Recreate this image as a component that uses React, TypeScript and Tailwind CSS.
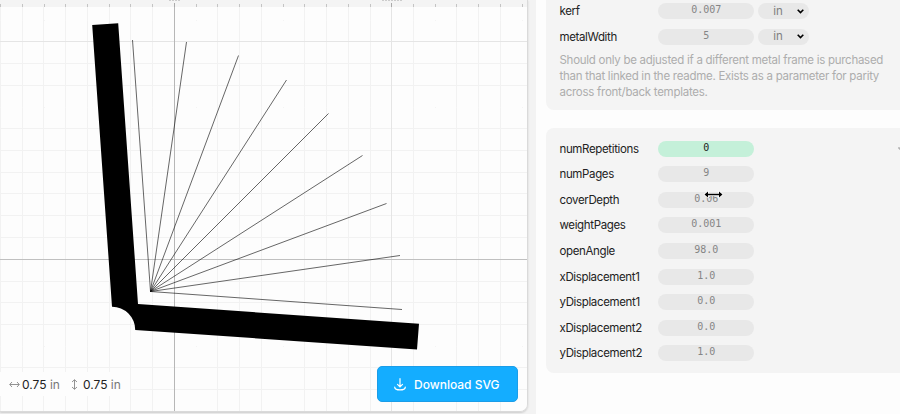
import React from "react";

const V = [0, 22, 43, 65, 87, 109, 130, 152, 217, 239, 261, 304, 326, 348, 370, 413, 456, 478, 500];
const H = [63, 85, 128, 150, 172, 193, 215, 237, 281, 302, 324, 367, 389];
const TICKS = [0, 22, 44, 65, 87, 109, 130, 152, 196, 217, 239, 261, 283, 304, 326, 348, 370, 413, 435, 456, 478, 500, 522];
const RAYS = [
  [132.5, 40], [186.5, 42], [238.5, 55.5], [286.5, 80], [328.5, 113.5],
  [362.5, 155.5], [386.5, 203.5], [400, 255.5], [402, 309.5],
];

function Drawing() {
  return (
    <svg className="block h-[411px] w-[528px]" viewBox="0 0 528 411">
      <rect width="528" height="411" fill="#fdfdfd" />
      {V.map((x) => <rect key={x} x={x} y="7" width="1" height="404" fill="#f2f2f2" />)}
      {H.map((y) => <rect key={y} x="0" y={y} width="528" height="1" fill="#f2f2f2" />)}
      {[20, 107, 346].map((y) => TICKS.map((x) => <rect key={`${x}-${y}`} x={x} y={y} width="1" height="1" fill="#f4f4f4" />))}
      <rect y="41" width="528" height="1" fill="#e5e5e5" />
      <rect x="391" y="3" width="1" height="408" fill="#e5e5e5" />
      <rect y="259" width="528" height="1" fill="#c0c0c0" />
      <rect x="174" y="3" width="1" height="408" fill="#b7b7b7" />
      <rect width="528" height="7" fill="#f4f4f4" />
      {TICKS.map((x) => <rect key={x} x={x} y="4" width="1" height="3" fill="#c4c4c4" />)}
      <rect x="174" y="3" width="1" height="4" fill="#aaaaaa" />
      <rect x="391" y="3" width="1" height="4" fill="#aaaaaa" />
      <path d="M169 .5h12M382 .5h20" stroke="#cccccc" strokeDasharray="2 1" />
      <path d="M92.2 25 118.2 23.2 138 304 419 323.8 417 349.5 135.2 330A23 23 0 0 0 112 306.8Z" fill="#000" />
      {RAYS.map(([x, y]) => <path key={x} d={`M150.5 291.5 ${x} ${y}`} stroke="#000" strokeWidth=".6" />)}
    </svg>
  );
}

function Arrow({ vertical = false }: { vertical?: boolean }) {
  return (
    <svg className={vertical ? "ml-[9px] mr-[3px] h-[11px] w-[11px] rotate-90" : "mr-[2px] h-[11px] w-[11px]"} viewBox="0 0 11 11" fill="none" stroke="#777" strokeWidth=".8">
      <path d="M1 5.5h9M3 3 .7 5.5 3 8M8 3l2.3 2.5L8 8" />
    </svg>
  );
}

function Unit() {
  return (
    <div className="ml-[4px] flex h-4 w-[51px] items-center rounded-full bg-[#e8e8e8] pl-[15px] text-[11.5px] tracking-[-0.1px] text-[#808080]">
      in
      <svg className="ml-[14px] h-[5px] w-[7px]" viewBox="0 0 7 5" fill="none" stroke="#000" strokeWidth="1.6"><path d="m.7.8 2.8 2.8L6.3.8" /></svg>
    </div>
  );
}

function Row({ name, value, unit = false, active = false }: { name: string; value: string; unit?: boolean; active?: boolean }) {
  return (
    <div className="flex h-[25.55px] items-center">
      <span className="w-[98.8px] text-[11.5px] leading-4 tracking-[-0.36px] text-[#222]">{name}</span>
      <div className={active
        ? "flex h-4 w-24 justify-center rounded-full bg-[#c4f0d9] font-['DejaVu_Sans_Mono',monospace] text-[10px] leading-[14px] text-[#222]"
        : "flex h-4 w-24 justify-center rounded-full bg-[#e8e8e8] font-['DejaVu_Sans_Mono',monospace] text-[10px] leading-[14px] text-[#858585]"}>
        {value}
      </div>
      {unit && <Unit />}
    </div>
  );
}

export default function App() {
  return (
    <main className="flex h-[414px] w-[900px] overflow-hidden bg-[#fdfdfd] font-['Inter',sans-serif]">
      <section className="relative h-[414px] w-[536px] shrink-0 bg-[#f3f3f3]">
        <div className="h-[412px] w-[528px] overflow-hidden rounded-br-lg border-b border-r border-[#dadada] shadow-[0_1px_2px_#ccc]">
          <Drawing />
        </div>
        <div className="absolute left-0 top-[372px] flex h-6 w-[130px] items-center bg-[#fdfdfd] pl-[9px] pt-px text-[12px] text-[#222]">
          <Arrow /><span>0.75 <span className="text-[#777]">in</span></span>
          <Arrow vertical /><span>0.75 <span className="text-[#777]">in</span></span>
        </div>
        <button className="absolute left-[377px] top-[366px] flex h-9 w-[141px] items-center whitespace-nowrap rounded-[5px] border border-[#1b9de8] bg-[#14adff] pl-4 pt-px text-[12px] font-medium text-white">
          <svg className="mr-2 h-[13px] w-3" viewBox="0 0 12 13" fill="none" stroke="#fff" strokeWidth="1.2" strokeLinecap="round"><path d="M6 .7v8M3.5 6.3 6 8.8l2.500-2.500M.7 9.1c.2 3.7 10.4 3.7 10.6 0" /></svg>
          Download SVG
        </button>
      </section>
      <section className="relative ml-[10px] w-[354px]">
        <div className="h-[110px] overflow-hidden rounded-bl-lg bg-[#f4f4f4] pl-[13.5px]">
          <div className="-mt-[1.5px]">
            <Row name="kerf" value="0.007" unit />
            <Row name="metalWdith" value="5" unit />
          </div>
          <p className="mt-[2.5px] whitespace-nowrap text-[11.5px] leading-4 tracking-[-0.27px] text-[#adadad]">
            Should only be adjusted if a different metal frame is purchased<br />
            than that linked in the readme. Exists as a parameter for parity<br />
            across front/back templates.
          </p>
        </div>
        <div className="mt-[18px] h-[245px] rounded-l-lg bg-[#f4f4f4] pl-[13.5px] pt-[8px]">
          <Row name="numRepetitions" value="0" active />
          <Row name="numPages" value="9" />
          <Row name="coverDepth" value="0.06" />
          <Row name="weightPages" value="0.001" />
          <Row name="openAngle" value="98.0" />
          <Row name="xDisplacement1" value="1.0" />
          <Row name="yDisplacement1" value="0.0" />
          <Row name="xDisplacement2" value="0.0" />
          <Row name="yDisplacement2" value="1.0" />
        </div>
        <svg className="absolute left-[157px] top-[189px] h-[11px] w-[21px]" viewBox="0 0 21 11"><path d="M1.500 5.500 5 2.500v2.300h11V2.500l3.500 3-3.500 3V6.200H5v2.300Z" fill="#000" stroke="#fff" strokeWidth="1.6" strokeLinejoin="round" paintOrder="stroke" /></svg>
        <svg className="absolute left-[352px] top-[147px] h-[3px] w-[2px]" viewBox="0 0 2 3"><path d="M0 1h2M1 2h1" stroke="#999" /></svg>
      </section>
    </main>
  );
}
